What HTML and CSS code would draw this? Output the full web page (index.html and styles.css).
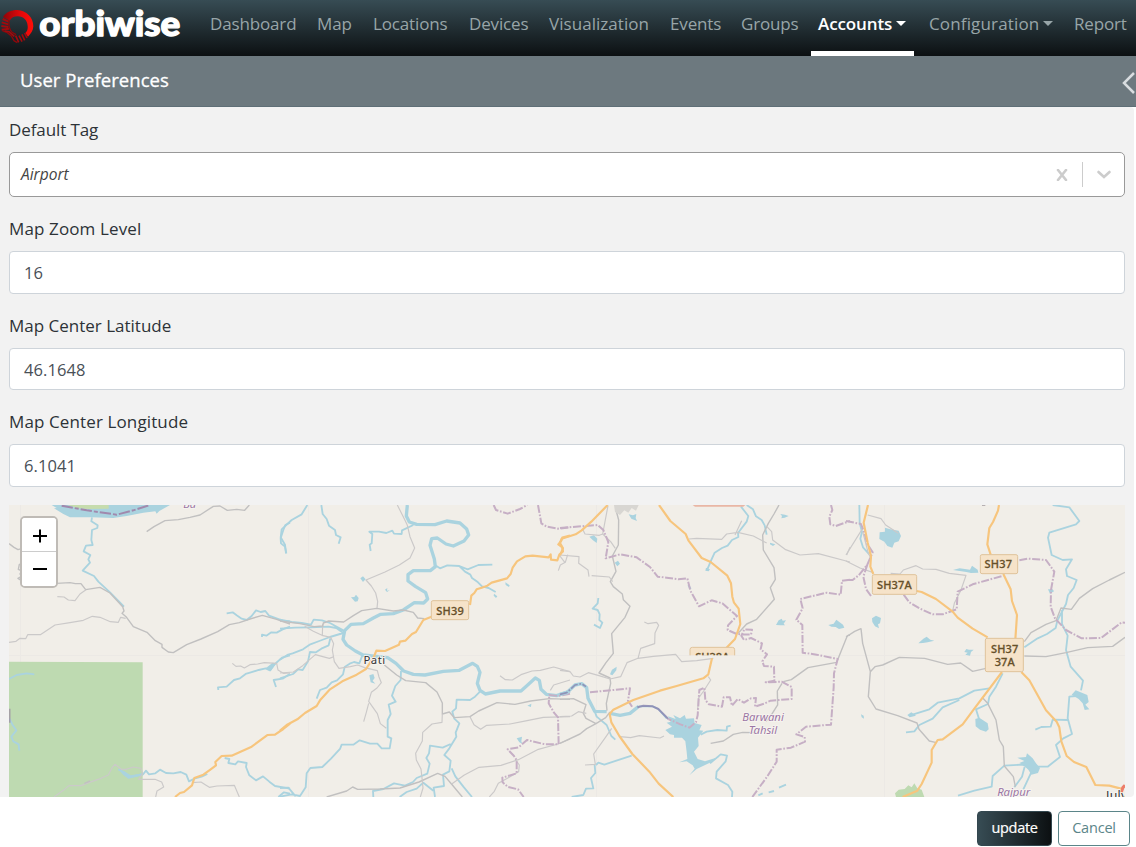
FILE: index.html
```html
<!DOCTYPE html>
<html lang="en">
<head>
<meta charset="utf-8">
<title>User Preferences</title>
<link rel="stylesheet" href="styles.css">
</head>
<body>
<nav class="navbar">
  <a class="brand" aria-label="orbiwise">
    <svg width="190" height="50" viewBox="0 0 570 150">
      <defs><linearGradient id="ring" x1="0" y1="0" x2="1" y2="0"><stop offset="0" stop-color="#8d0508"/><stop offset=".55" stop-color="#e0080b"/><stop offset="1" stop-color="#ff0d08"/></linearGradient></defs>
      <path fill="url(#ring)" d="M9 51C17 37 33 30 52 30C79 31 100 52 100 79C99 93 93 101 84 110L76 99C82 94 84 87 83 78C82 60 69 48 52 49C42 49 34 53 29 62Z"/>
      <path fill="none" stroke="#a20a0d" stroke-width="6" d="M8 57l18 8M5 67l20 6M4 78l21 3M5 89l22-3"/>
      <path fill="none" stroke="#8d080b" stroke-width="4" d="M27 62C25 78 28 88 36 97L48 104M7 92L22 98 34 108 42 122 52 128"/>
      <path fill="none" stroke="#a20a0d" stroke-width="5" d="M14 93L27 95 43 109M47 107l9 20M57 107l9 18M66 103l8 18M74 99l7 15"/>
      <text class="wordmark" x="118" y="107" textLength="423" lengthAdjust="spacingAndGlyphs">orbiwise</text>
    </svg>
  </a>
  <div class="links">
    <a>Dashboard</a><a>Map</a><a>Locations</a><a>Devices</a><a class="loose">Visualization</a><a>Events</a><a>Groups</a>
    <a class="active">Accounts<i class="caret"></i></a><a class="looser">Configuration<i class="caret"></i></a><a>Report</a>
  </div>
</nav>
<header class="title-bar">
  <h1>User Preferences</h1>
  <svg class="collapse" width="14" height="24" viewBox="0 0 14 24"><path d="M13 2L3 12l10 10"/></svg>
</header>
<main class="form">
  <div class="field">
    <label class="tight">Default Tag</label>
    <div class="select">
      <span class="value">Airport</span>
      <svg class="clear" width="12" height="12" viewBox="0 0 12 12"><path d="M2 1l8 10M10 1L2 11"/></svg>
      <span class="divider"></span>
      <svg class="chevron" width="14" height="9" viewBox="0 0 14 9"><path d="M1.500 2L7 7l5.500-5"/></svg>
    </div>
  </div>
  <div class="field"><label class="wide">Map Zoom Level</label><div class="input">16</div></div>
  <div class="field"><label>Map Center Latitude</label><div class="input">46.1648</div></div>
  <div class="field"><label class="wide">Map Center Longitude</label><div class="input">6.1041</div></div>
  <div class="map">
    <svg class="tiles" width="1116" height="292" viewBox="9 505 1116 292">
      <rect x="9" y="505" width="1116" height="292" fill="#f1eee8"/>
      <path class="seam" d="M20.500 505V797M308.500 505V797M596.500 505V797M884.500 505V797M9 655.500H1125"/>

      <!-- West: forest and river -->
      <g transform="translate(0 500) scale(.33333)">
        <path class="forest" d="M27 485L428 487V891H27Z"/>
        <path class="lake" d="M155 15L170 24 162 25 190 42 210 52 275 52 340 54 380 48 430 38 466 34 470 41 478 33 510 15Z"/>
        <path fill="#c6dcae" d="M203 15L232 25 262 27 326 26V15Z"/>
        <path class="border wide" d="M185 17L260 31 350 44 400 31 450 15"/>
        <path class="water" d="M276 52L274 64 293 76 292 84 276 90 274 120 278 135 258 137 251 154 271 165 265 178 270 188 248 212 282 228 295 245 330 277 372 320"/>
        <path class="water" d="M870 68L856 75 850 90 842 115 843 130 855 140 859 160M680 340L698 337 710 346 725 356 740 360 755 348 768 331 782 336 796 333 807 347 848 362 870 364M870 380L848 388 830 398 814 397 799 407 786 404 786 411M870 466L846 473 825 492 810 511 797 505 776 510 750 518 737 522 720 535 702 540 680 560 654 562 655 570M870 521L848 536 821 540 828 561"/>
        <path class="water" d="M27 537L50 525 80 520 103 523M28 656L38 675 49 691 34 710 40 724 56 733 58 752M355 808L371 816 386 832 430 822 438 812 447 823 466 820 480 809 498 819 520 820 542 816 559 824 567 844 585 835 605 830 622 822M674 774L688 777 685 789 706 793 714 784 740 789 738 801 748 826 768 841 789 829 808 845 825 858 870 866M835 891L852 877 870 881"/>
        <path class="lake" d="M355 808L375 815 392 826 430 820 430 826 385 836 370 825ZM797 505L818 488 828 490 812 514Z"/>
        <path class="minor" d="M440 95L462 80 495 62 535 59 570 52 600 45 640 19 660 18 682 31 710 28 734 31 748 15M27 131L42 142 54 149 67 145M170 250L210 248 226 251 243 251 257 269 300 262 330 279 368 320 372 333 366 340 378 350 400 380 441 397 466 422 486 433 486 442 505 456 520 458 560 434 603 417 653 395 688 374 718 368 750 357 787 346 830 358 870 372"/>
        <path class="minor thin" d="M27 427L48 424 60 415 77 416 83 404 121 404 165 375 210 368 250 361 277 349 300 352 331 365 355 367 362 352 377 355M172 290L192 291 205 300 225 302 240 282 258 269M697 490L708 499 722 498 733 504 750 494 773 492 793 488 830 490 834 510 850 520 870 519M162 891L190 871 207 857 243 857 275 845 303 835 325 825 337 802 345 793 364 808 378 808 400 801 423 805 428 821 416 838 465 838 485 846 491 861 471 873 467 891M577 848L603 846 617 855 628 862 651 858 703 856 718 891"/>
        <path class="minor" d="M67 191L58 193 55 208 66 213 60 222 66 228 54 235 66 243M253 850l17-7"/>
        <path stroke="#9b8aa0" stroke-width="5" opacity=".7" d="M29 626V668"/>
        <path class="major" d="M525 891L540 879 552 876 576 856 583 834 610 824 628 811 648 796 646 786 665 768 695 767 755 740 803 705 825 704 850 687 870 671"/>
        <text class="place purple" x="569" y="24" font-size="33">Ba</text>
      </g>

      <!-- Centre-west: river meanders around Pati -->
      <g transform="translate(280 500) scale(.33333)">
        <path class="river" d="M382 15L379 48 388 66 410 73 465 74 500 63 540 69 560 87 566 105 552 123 520 138 498 132 472 114 455 116 450 136 463 177 466 200 451 212 400 212 384 224 384 243 406 259 437 278 443 297 431 309 403 308 370 330 340 341 302 343 280 354 250 371 213 373 194 392 189 418 200 435 226 453 249 465 323 473 348 490 371 513 400 523 435 525 490 514 538 511 578 490 592 499 600 517 592 550 600 571 616 582 660 573 723 573 743 555 766 534 778 541 783 568 799 583 830 587 870 573"/>
        <path class="water" d="M82 15L65 43 35 60 5 88 2 112 15 134 18 160M124 15L128 42 140 57 147 77 165 90 168 105 182 112 176 131M400 75L366 91 365 102 342 101 337 92 319 99 297 95 268 95 277 102 275 130 269 134 272 153M468 197L480 205 502 196 538 198 563 208 595 195 637 194M538 198L555 215 571 224 576 234 594 247 606 259 626 264 647 276"/>
        <path class="water" d="M0 359L35 366 65 369 93 374 101 359 126 361 150 369 166 378 190 391M0 386L45 383 92 382 145 380 169 384 190 399 150 411 118 423 91 433 69 448 38 460 22 465 0 479M0 535L39 522 54 508 68 510 84 484 90 456 108 457 124 446 146 436 151 415M110 596L120 570 140 563 155 547 171 541 189 523 194 501 209 491 222 486 238 490 247 466M363 513L362 540 346 558 336 587 347 605 326 614 332 642 323 660 323 710 334 715 329 745 305 745 292 731 270 731 239 721 220 734 185 734 180 747 153 776 127 801 91 804 80 820 77 862 60 888 35 883 0 890M0 864L25 863 47 889M600 575L585 590 570 600 530 599 528 625 517 635 523 656 538 670 527 698 529 710 508 745 493 765 512 782 508 814 489 824 492 858 461 863 465 891M512 732L488 743 450 737 447 760 439 774 449 791 442 821 410 834 399 846 375 857 342 850 310 867 279 873 280 891M359 891L380 876 410 866 430 848 460 872M515 805L526 829 550 860 576 891"/>
        <path class="lake" d="M213 292l10-1 5-7 8 10-3 10-8 1zM241 235l8-6 8 9-8 8zM268 526l12-4 4 12-6 8 8 9-14-4zM676 247l13 9-2 5-10-6zM642 281l10 8-4 5-7-7zM710 715l16-5-2 14 3 7-9-4zM742 617l12-6-1 10zM315 269l7-5-1 8 8-1-8 5z"/>
        <path class="minor thin" d="M352 15L375 61 382 76 390 110 404 144 390 174 358 195 315 216 258 240 274 258 287 279 293 304 291 325M74 379L100 394 126 406 152 412 161 431 157 450 163 485 177 505 211 500 233 495 254 503 292 512 297 531 304 548 291 564 274 577 266 604 292 641 301 671 319 685M266 610L259 637 251 665M128 373L127 405M0 519L40 516 68 497 106 464 148 475 162 470"/>
        <path class="minor" d="M0 363L60 371 102 380 128 378 130 369 146 363 191 366 220 347 245 332 290 325 340 333 370 330 400 337 413 354 433 356M313 495L350 525 377 542 437 548 471 576 487 609 487 642 508 636 523 653 570 650 596 633 651 608 705 613 752 603 808 596 870 598M140 891L200 873 218 861 233 868 300 867 360 864 417 846 473 820 495 829 517 855 547 891"/>
        <path class="minor thin" d="M487 642L486 667 456 672 428 697 427 723 407 760 409 780 423 807 427 843 429 864 421 891M570 650L582 674 602 688 620 676 690 672 730 664 790 652 870 650M660 527L676 539 697 540 723 524 756 513 781 511 821 501 870 515M811 571L821 555 870 540M515 852L553 825 597 802 663 796 715 779 775 748 834 732 870 717M628 891L643 874 655 850 685 833 716 815 718 795 707 780M835 212L841 195 856 187 863 164M839 167L855 188"/>
        <path class="border" d="M641 15L648 30 683 41 720 27 742 15M774 15L784 70 800 80 834 86 870 82M870 581L835 588 808 585 806 610 822 638 834 652 836 733 795 733 741 720 716 742 683 748 702 768 710 781 710 820 667 833 668 847 684 861 714 868 731 891"/>
        <path class="major" d="M0 692L20 675 52 658 75 639 110 618 120 601 150 568 187 544 230 524 258 507 282 470 289 452 315 453 357 434 360 425 376 422 396 402 408 396 430 360 460 348M570 315L574 287 583 279 590 268 605 263 622 257 635 248 681 235 692 222 698 203 711 184 736 169 758 167 806 172 812 163 813 179 832 181 838 164 849 154 846 141 835 133 844 122 847 113 870 107"/>
        <g class="shield"><rect x="454" y="302" width="112" height="57" rx="5"/><text x="510" y="344" textLength="83">SH39</text></g>
        <text class="place" x="283" y="491" font-size="34" textLength="65">Pati</text>
      </g>

      <!-- Centre-east: reservoir and Barwani Tahsil -->
      <g transform="translate(560 500) scale(.33333)">
        <path class="river" d="M0 583L20 578 45 555 65 551 80 563 84 595 104 634 140 635M150 640L180 646 210 640 236 619"/>
        <path class="water" d="M236 619L278 619 295 627 320 655"/>
        <path fill="none" stroke="#8882ae" stroke-width="5" stroke-dasharray="24 5 5 5" opacity=".8" d="M0 583L20 578 45 555 65 551 78 560"/>
        <path fill="none" stroke="#8882ae" stroke-width="6" opacity=".8" d="M232 622L250 617 278 619 295 627 325 657"/>
        <path class="water" d="M104 634L110 650 140 675 154 708 166 719M543 20L565 48 560 65 534 99 535 111 516 120 503 137 486 144 464 158 453 182 442 208M560 15L579 28 588 49 605 60 614 76 620 104M108 795L115 788 133 794 160 785 215 767M104 795L106 819 93 834 100 865 78 866 70 885 35 891M115 294L113 310 98 326 113 330 119 343 118 360 127 368 120 384 102 374M385 255L392 267M422 704L440 695 472 690 500 692 501 680 512 677M450 790L482 763 501 767 497 784 470 815 468 835 504 855 517 875 516 891M595 886L608 880M626 877L642 873M657 863L678 854"/>
        <path class="lake" d="M316 690L336 680 320 668 332 665 324 649 347 657 340 645 360 655 374 645 378 656 402 655 404 669 425 675 418 691 430 692 414 713 416 738 402 755 413 777 435 784 478 770 448 789 410 807 388 826 404 806 398 796 380 784 358 787 382 777 380 756 376 724 366 713 342 713 342 705 330 703zM88 110l14-4 10 10-2 13-12-9zM206 43l13 3 10-4-2 12 4 9-17-7zM164 188l10-6 6 9-8 8zM438 203l12 5-4 6-10-2zM661 42l14 2 11 4-12 5-10 2 2-7zM630 128l16 5-7 5-9-5zM648 375l8-14 9-5 3 6 10-1-7 10 4 5-13 0zM805 375l16-4 8-12 12 9 8 6 4 9-16 4-10-6-13-1zM150 523l6-14 14-9-1 11-12 15z"/>
        <path class="minor" d="M178 15L168 30 176 60 175 135 157 168 168 214 151 245 160 260 187 282 190 299 210 319 195 352 155 401 160 460 138 488 117 519 150 534 152 550 139 610 141 632M0 598L40 596 78 614 70 640 78 655 108 671 80 686 60 702 0 730M108 671L137 653 150 636M657 15L642 42 625 70 608 105 610 150 642 203 646 238 631 263 643 298 590 358 560 372 535 399M670 545L694 539 744 503 830 487 862 407 870 405M666 550L652 573 653 615 636 642 617 665M590 698L548 697 520 703 490 723 452 730"/>
        <path class="minor thin" d="M144 17L128 102 118 106 75 102 68 88M128 102L152 125 166 145M0 165L57 170 56 190 84 210 87 230M95 227L148 231 158 245M387 117L410 115 485 118 500 102 533 97 580 108 620 129M525 105L545 62M620 79L635 95 638 120 677 149 720 165 775 161 870 186M860 165L870 142M253 366L264 371 290 367 296 376 285 399 284 431 242 445 234 475 280 469 347 463 365 485 410 482 460 475M234 475L201 488 182 530 150 537 117 527 85 518 60 531 40 528 30 515 0 511M0 650L35 648 55 635 79 640M445 530L452 540 431 573 415 595 413 630M180 710L212 713 238 707 300 714 312 708M155 685L138 710 101 762 106 793 75 795"/>
        <path fill="#d8d6d2" d="M162 15H236L228 32 215 24 205 38 193 31 180 45 165 36Z"/>
        <path class="border" d="M0 84L113 75 130 90 145 126 137 175 180 163 230 172 270 201 293 230 320 233 355 238 382 235 391 272 417 319 455 301 487 310 531 348 504 376 503 390 530 402 573 404 576 389 553 388 544 407 552 420 573 414 606 430 602 448 621 463 607 484 612 498 642 500 643 542 617 547 665 545 695 561 695 597 632 602 612 611 585 620 588 594 573 595 552 608 533 597 516 617 510 592 491 592 486 620 447 613 436 600 433 563 418 570 413 646 408 666 388 683 361 673 325 657M90 577L210 565 204 602 219 624M813 15L817 30 808 50 811 73 827 78 870 63M870 239L846 242 842 284 800 278 721 297 728 325 709 359 727 375 728 458 770 464 833 477 822 520 821 562 813 674 738 680 709 703 734 711 735 725 693 743 650 749 650 785 622 829 577 891"/>
        <path class="major" d="M143 15L94 65 65 91 47 103 5 116 0 129 9 145 0 166M297 15L331 63 377 102 385 121 425 174 452 186 502 227 513 250 517 290 522 308 536 326 541 372 525 417 499 444M456 475L445 523 430 535 350 558 300 572 220 600 160 629 149 642 154 667 178 708 217 762 268 815 296 851 340 891"/>
        <path fill="#f6e3c9" stroke="#dfc39b" stroke-width="3" d="M390 466V449Q390 442 397 442H517Q524 442 524 449V466"/>
        <svg x="390" y="442" width="134" height="24" viewBox="390 442 134 24"><text class="cut" x="457" y="484" textLength="102">SH38A</text></svg>
        <path fill="#e9b6a5" d="M398 15H556L550 20H405Z"/>
        <text class="place purple" x="609" y="663" font-size="34" textLength="125">Barwani</text>
        <text class="place purple" x="609" y="703" font-size="34" textLength="85">Tahsil</text>
      </g>

      <!-- East: junction of SH37 and SH37A -->
      <g transform="translate(846 500) scale(.33333)">
        <path class="forest" d="M147 880L158 869 176 867 187 856 197 862 205 850 214 865 227 869 235 891H150Z"/>
        <path class="water" d="M40 15L41 70 48 95 43 116 51 142 70 163M620 15L670 22 700 63 690 73 610 98 606 113 617 165 650 180 678 178 660 208 663 228 692 240 683 264 666 285 660 312 634 362 629 384 603 402 575 415 535 442M648 330L648 372 665 407 660 450 674 500 711 542 705 571M690 588L670 590 665 655 678 702 652 715 630 735 642 771 605 800 560 800 525 794 475 797 440 828 437 860 385 872 336 887M470 520L450 560 430 590 426 612 390 628 400 660M430 565L385 572 340 595 275 608 250 628 190 647M180 697L205 694 220 675 260 656 290 622 340 600M568 689L586 681 614 680 620 659 665 660M536 800L528 830 505 862M560 808L532 868"/>
        <path class="lake" d="M101 97L117 95 117 83 133 88 158 92 165 108 158 124 145 128 139 143 124 138 115 125 100 117zM321 210l20-5 31 4 6-12 17 12 2 9-22 1-14-3zM78 355l12-8 15 7-3 16-6 3 3 12-12-6-8-13zM217 430l15-14 10-6 11 9 12 3-20 5-14 2zM355 456l6-9 8 2 14 0-8 7-3 11-14-3 7-6zM606 268l14 0 4 6-12 7zM45 643l8 4 1 9-7-4zM388 657l12-4 25 17 3 18-8 7-18-6-13-10zM514 773l26-2 3-11 17 15 10 15 12 14-6 15-20 5-9-15-16-14-11-6 15-6zM677 584l12-13 13 5 22 9 4 21-10 8 12 14-14 2-6-20-12-13zM184 645l12-8 14 10-19 5z"/>
        <path class="minor" d="M0 411L26 394 45 386 50 430 73 515 67 590 90 627 155 647 213 669 219 688 250 723 271 728M73 515L87 500 110 495 160 472 236 475 305 493 344 489 380 514 420 505M535 468L600 470 660 458 725 443 800 439 837 412M535 425L555 398 600 373 630 362 645 324 676 328 700 295 740 266 790 240 837 217M411 595L425 610 450 660 460 720 472 740 475 798 502 830 508 860"/>
        <path class="minor thin" d="M65 45L105 56 119 75 157 100M0 165L50 85M0 183L42 204 82 218M134 220L162 222 172 210 210 197 230 207 270 208 310 220 360 226 345 270 325 310 320 333M50 95L67 160 76 178"/>
        <path class="border" d="M0 63L45 72 56 100 64 132 80 157 64 194 38 226 20 240 0 240M64 194L52 230 60 267 75 288M173 284L190 307 220 325 260 343 290 343 332 328 335 275 380 253 472 227M520 181L545 176 600 180 625 215 615 270 614 320 627 355 660 390 707 415 765 414 827 367 837 368"/>
        <path class="major" d="M66 15L53 68 65 128 75 168 73 200 82 222M212 273L227 276 270 297 320 335 335 353 380 386 425 412M459 15L456 32 441 66 430 84 424 133 434 164M472 222L494 268 498 303 513 345 508 418M468 516L385 626 350 673 290 718 275 720 257 750 257 788 227 852 214 872 170 891M526 516L550 541 600 631 632 665 640 682 646 724 662 768 684 786 721 801 748 855 790 857 825 866 837 860"/>
        <path stroke="#ec7d6b" stroke-width="9" fill="none" d="M825 880L831 862 837 856"/>
        <g class="shield"><rect x="403" y="164" width="112" height="57" rx="5"/><text x="457" y="204" textLength="83">SH37</text></g>
        <g class="shield"><rect x="79" y="224" width="133" height="59" rx="5"/><text x="145" y="266" textLength="104">SH37A</text></g>
        <g class="shield"><rect x="418" y="415" width="114" height="100" rx="5"/><text x="476" y="458" textLength="82">SH37</text><text x="476" y="498" textLength="60">37A</text></g>
        <text class="place purple" x="503" y="888" font-size="34" textLength="99">Rajpur</text>
        <text class="place" x="812" y="900" font-size="37" textLength="64">July</text>
        <path stroke="#77707a" stroke-width="3" d="M408 15h10"/>
      </g>
    </svg>
    <div class="zoom">
      <button aria-label="Zoom in"><svg width="16" height="16" viewBox="0 0 16 16"><path d="M1 8h14M8 1.500v13"/></svg></button>
      <button aria-label="Zoom out"><svg width="16" height="16" viewBox="0 0 16 16"><path d="M1 8h14"/></svg></button>
    </div>
  </div>
</main>
<footer class="actions">
  <button class="btn primary">update</button>
  <button class="btn outline">Cancel</button>
</footer>
</body>
</html>
```
FILE: styles.css
```css
* { box-sizing: border-box; }
body {
  margin: 0;
  width: 1136px;
  height: 847px;
  overflow: hidden;
  background: #fff;
  color: #2d3237;
  font-family: "Open Sans", "Noto Sans", sans-serif;
  font-size: 17px;
}
.navbar {
  display: flex;
  height: 56px;
  background: linear-gradient(#374c54, #0c1012);
  overflow: hidden;
}
.brand { flex: 0 0 210px; }
.brand svg { display: block; }
.wordmark {
  font: 900 104px Lato, sans-serif;
  fill: #fff;
  stroke: #fff;
  stroke-width: 4;
  stroke-linejoin: round;
}
.links {
  display: grid;
  grid-template-columns: 107px 56px 96px 80px 121px 71px 78px 110px 145px 80px;
  color: #98a5a8;
  letter-spacing: -.15px;
  line-height: 48px;
  white-space: nowrap;
}
.links .loose { letter-spacing: .05px; }
.links .looser { letter-spacing: .15px; }
.links .active {
  margin-left: -8px;
  padding-left: 7px;
  width: 103px;
  border-bottom: 5px solid #fff;
  color: #fff;
  font-weight: 600;
  letter-spacing: -.1px;
}
.caret {
  display: inline-block;
  margin-left: 4px;
  vertical-align: 4px;
  border: 5px solid transparent;
  border-top-color: currentColor;
  border-bottom: 0;
}
.title-bar {
  display: flex;
  align-items: center;
  justify-content: space-between;
  height: 51px;
  padding: 0 1px 0 20px;
  background: #6d797f;
  border-bottom: 1px solid #5f6f77;
  color: #fff;
}
.title-bar h1 {
  margin: 0 0 3px;
  font-size: 18.500px;
  font-weight: 500;
  letter-spacing: .05px;
  -webkit-text-stroke: .3px #fff;
}
.collapse { margin-top: 4px; }
.collapse path { fill: none; stroke: #d9dde0; stroke-width: 2.500; }
.form {
  width: 1134px;
  height: 690px;
  padding: 11px 9px 0;
  background: #f2f2f2;
  border-radius: 0 4px 4px 0;
}
.field { margin-bottom: 20px; }
.field label {
  display: block;
  height: 24px;
  margin-bottom: 10px;
  line-height: 24px;
}
.field .tight { letter-spacing: -.1px; }
.field .wide { letter-spacing: .12px; }
.input {
  height: 42.500px;
  padding-left: 14px;
  line-height: 41px;
  border: 1px solid #ced4da;
  border-radius: 4px;
  background: #fff;
  color: #495057;
  font-size: 16.500px;
  letter-spacing: .1px;
}
.select {
  display: flex;
  align-items: center;
  height: 45px;
  padding: 0 13px 0 11px;
  border: 1px solid #999;
  border-radius: 5px;
  background: #fff;
}
.select .value {
  flex: 1;
  padding-bottom: 2px;
  color: #444;
  font-size: 15.500px;
  font-style: italic;
}
.select svg path { fill: none; stroke: #ccc; stroke-width: 2.600; stroke-linecap: round; }
.divider { width: 1px; height: 25px; margin: 0 14px; background: #ccc; }
.map { position: relative; height: 292px; margin-top: -1.500px; }
.tiles { display: block; }
.tiles path { stroke-linejoin: round; }
.seam { stroke: #ece9e5; stroke-width: 1; fill: none; }
.forest { fill: #bedab1; }
.lake { fill: #aad3df; }
.water, .river, .minor, .border, .major { fill: none; }
.water { stroke: #aad3df; stroke-width: 5.500; }
.river { stroke: #aad3df; stroke-width: 10; }
.minor { stroke: #c1c0c0; stroke-width: 4.200; }
.minor.thin { stroke: #cbc9c9; stroke-width: 3.500; }
.border { stroke: #c6afc5; stroke-width: 6; stroke-dasharray: 24 5 5 5; }
.border.wide { stroke: #a189ad; stroke-width: 6; stroke-dasharray: 34 6 12 6; }
.major { stroke: #f7c57d; stroke-width: 6.500; }
.shield rect { fill: #f6e3c9; stroke: #dfc39b; stroke-width: 3; }
.shield text, .cut {
  fill: #66502a;
  font: 500 33px "Noto Sans", sans-serif;
  text-anchor: middle;
  stroke: #66502a;
  stroke-width: .8;
}
.place {
  fill: #333;
  stroke: #f8f5f1;
  stroke-width: 5;
  paint-order: stroke;
  font-family: "Noto Sans", sans-serif;
  text-anchor: middle;
}
.place.purple { fill: #9b76a4; font-style: italic; }
.zoom {
  position: absolute;
  left: 11px;
  top: 11px;
  width: 38px;
  height: 72px;
  border: 2px solid #bfbbb6;
  border-radius: 5px;
  overflow: hidden;
  background: #fff;
}
.zoom button {
  display: flex;
  align-items: center;
  justify-content: center;
  width: 34px;
  height: 34px;
  padding: 0 0 1px 2px;
  border: 0;
  background: #fff;
}
.zoom button:first-child { height: 34px; border-bottom: 1px solid #ccc; padding-top: 4px; }
.zoom path { stroke: #000; stroke-width: 2; }
.actions {
  display: flex;
  justify-content: flex-end;
  gap: 6px;
  height: 50px;
  padding: 14px 6px 0 0;
}
.btn {
  height: 35px;
  padding: 0 0 2px;
  border-radius: 4px;
  font: 14.500px "Open Sans", sans-serif;
}
.primary {
  width: 75px;
  border: 1px solid #33474f;
  background: linear-gradient(90deg, #374c54, #0c1012);
  color: #fff;
  letter-spacing: -.3px;
  -webkit-text-stroke: .2px #fff;
}
.outline {
  width: 72px;
  border: 1px solid #5b8589;
  background: #fff;
  color: #5b8589;
  letter-spacing: -.2px;
}
```
